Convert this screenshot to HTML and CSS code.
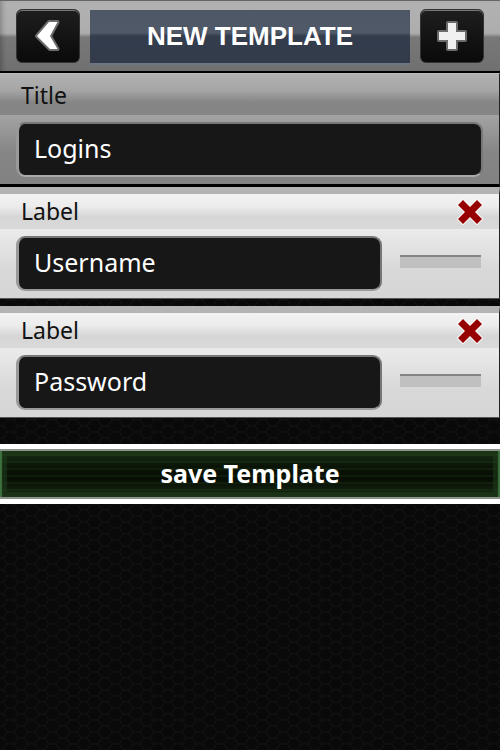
FILE: index.html
```html
<!doctype html>
<html lang="en">
<head>
    <meta charset="UTF-8">
    <meta name="viewport" content="width=device-width, initial-scale=1.0">
    <title>New Template</title>
    <link rel="stylesheet" href="styles.css">
</head>
<body>
<header class="toolbar">
    <button type="button" class="tool_button" aria-label="Back">
        <svg width="32" height="36" viewBox="0 0 32 36">
            <path d="M17 4h8.500L18 18l7.500 13H18L5 18z" fill="#fff" stroke="#6c6c6c" stroke-width="4" stroke-linejoin="round" paint-order="stroke"/>
        </svg>
    </button>
    <h1 class="toolbar_title">NEW TEMPLATE</h1>
    <button type="button" class="tool_button" aria-label="Add field">
        <svg width="32" height="32" viewBox="0 0 32 32">
            <path d="M12 3h8v9h9v8h-9v9h-8v-9H3v-8h9z" fill="#f0f0f0" stroke="#6c6c6c" stroke-width="4" stroke-linejoin="round" paint-order="stroke"/>
        </svg>
    </button>
</header>

<form class="template">
    <section class="group group_title">
        <div class="group_head">
            <label for="title">Title</label>
        </div>
        <div class="group_body">
            <input type="text" id="title" class="field" value="Logins">
        </div>
    </section>

    <section class="group">
        <div class="group_head">
            <label for="field_1">Label</label>
            <button type="button" class="remove" aria-label="Remove">
                <svg width="28" height="28" viewBox="0 0 28 28">
                    <path d="M7 2l7 7 7-7 5 5-7 7 7 7-5 5-7-7-7 7-5-5 7-7-7-7z" fill="#960000" stroke="#fafafa" stroke-width="2" stroke-linejoin="round" paint-order="stroke"/>
                </svg>
            </button>
        </div>
        <div class="group_body">
            <input type="text" id="field_1" class="field" value="Username">
            <span class="handle"></span>
        </div>
    </section>

    <section class="group">
        <div class="group_head">
            <label for="field_2">Label</label>
            <button type="button" class="remove" aria-label="Remove">
                <svg width="28" height="28" viewBox="0 0 28 28">
                    <path d="M7 2l7 7 7-7 5 5-7 7 7 7-5 5-7-7-7 7-5-5 7-7-7-7z" fill="#960000" stroke="#fafafa" stroke-width="2" stroke-linejoin="round" paint-order="stroke"/>
                </svg>
            </button>
        </div>
        <div class="group_body">
            <input type="text" id="field_2" class="field" value="Password">
            <span class="handle"></span>
        </div>
    </section>

    <button type="submit" class="save">save Template</button>
</form>
</body>
</html>
```

FILE: styles.css
```css
* {
    box-sizing: border-box;
}

body {
    margin: 0;
    min-height: 100vh;
    font-family: "Noto Sans", sans-serif;
    background: #090909 url("data:image/svg+xml,%3Csvg xmlns='http://www.w3.org/2000/svg' width='21' height='12'%3E%3Cpath d='M0 6h3l4-6h7l4 6h3M3 6l4 6h7l4-6' fill='none' stroke='%23131313'/%3E%3C/svg%3E");
}

button {
    padding: 0;
    border: 0;
    font-family: inherit;
    cursor: pointer;
}

svg {
    display: block;
}

.toolbar {
    display: flex;
    gap: 10px;
    height: 73px;
    padding: 8px 16px 0;
    border-top: 1px solid #666;
    border-bottom: 2px solid #000;
    background: linear-gradient(#b2b2b2, #adadad 46%, #787878 52%, #707070);
    box-shadow: inset 5px 0 5px -3px rgba(0, 0, 0, 0.25);
}

.tool_button {
    display: flex;
    align-items: center;
    justify-content: center;
    width: 64px;
    height: 54px;
    border: 1px solid #333;
    border-radius: 6px;
    background: linear-gradient(#1e1e1e, #0a0a0a);
    box-shadow: inset 0 1px 0 #777;
}

.toolbar_title {
    flex: 1;
    height: 55px;
    margin: 1px 0 0;
    border-bottom: 2px solid #6d7684;
    background: linear-gradient(#4d5766, #4f5967 43%, #343d4d 49%, #333b4b);
    color: #fff;
    font-family: "Liberation Sans", Arial, sans-serif;
    font-size: 26px;
    font-weight: bold;
    line-height: 53px;
    text-align: center;
}

.group {
    margin-bottom: 7px;
    border-top: 7px solid #b4b4b4;
    border-right: 1px solid #222;
    border-bottom: 1px solid #555;
}

.group_head {
    display: flex;
    align-items: center;
    justify-content: space-between;
    height: 35px;
    padding: 0 15px 0 21px;
    background: linear-gradient(#f3f3f3, #ececec 35%, #d6d6d6 65%, #d9d9d9);
    color: #111;
    font-size: 23px;
    line-height: 33px;
}

.group_body {
    display: flex;
    gap: 18px;
    height: 69px;
    padding: 7px 18px 0 16px;
    background: linear-gradient(#ebebeb, #d8d8d8 60%, #d6d6d6);
}

.group_title {
    margin-bottom: 0;
    border-top: 1px solid #bbb;
    border-bottom: 3px solid #000;
}

.group_title .group_head {
    height: 41px;
    padding-top: 2px;
    background: linear-gradient(#b2b2b2, #a5a5a5 40%, #858585 70%, #858585);
}

.group_title .group_body {
    padding-right: 16px;
    background: linear-gradient(#a3a3a3, #858585 55%, #828282);
}

.field {
    flex: 1;
    min-width: 0;
    height: 55px;
    padding: 0 15px 4px;
    border: 2px solid #777;
    border-bottom-color: #999;
    border-left: 3px solid #999;
    border-radius: 9px;
    background: #171717;
    color: #fff;
    font-family: inherit;
    font-size: 25px;
}

.group_title .field {
    border-color: #777 #777 #aaa #999;
}

.remove {
    background: none;
}

.handle {
    width: 81px;
    height: 13px;
    margin-top: 19px;
    border-top: 2px solid #858585;
    background: #c0c0c0;
}

.save {
    display: block;
    width: 100%;
    height: 60px;
    margin-top: 26px;
    padding-bottom: 2px;
    border: solid #fff;
    border-width: 5px 0;
    background:
        repeating-linear-gradient(transparent 0 5px, rgba(50, 95, 40, 0.16) 5px 7px),
        linear-gradient(#1c3216, #0a1407 35%, #070d05 60%, #182b12);
    box-shadow: inset 0 2px 0 #8c918c, inset 0 -2px 0 #8c918c, inset 2px 0 1px #3f703f, inset -2px 0 1px #3f703f, inset 0 0 0 7px rgba(30, 58, 25, 0.6);
    color: #fff;
    font-size: 25px;
    font-weight: bold;
}
```
